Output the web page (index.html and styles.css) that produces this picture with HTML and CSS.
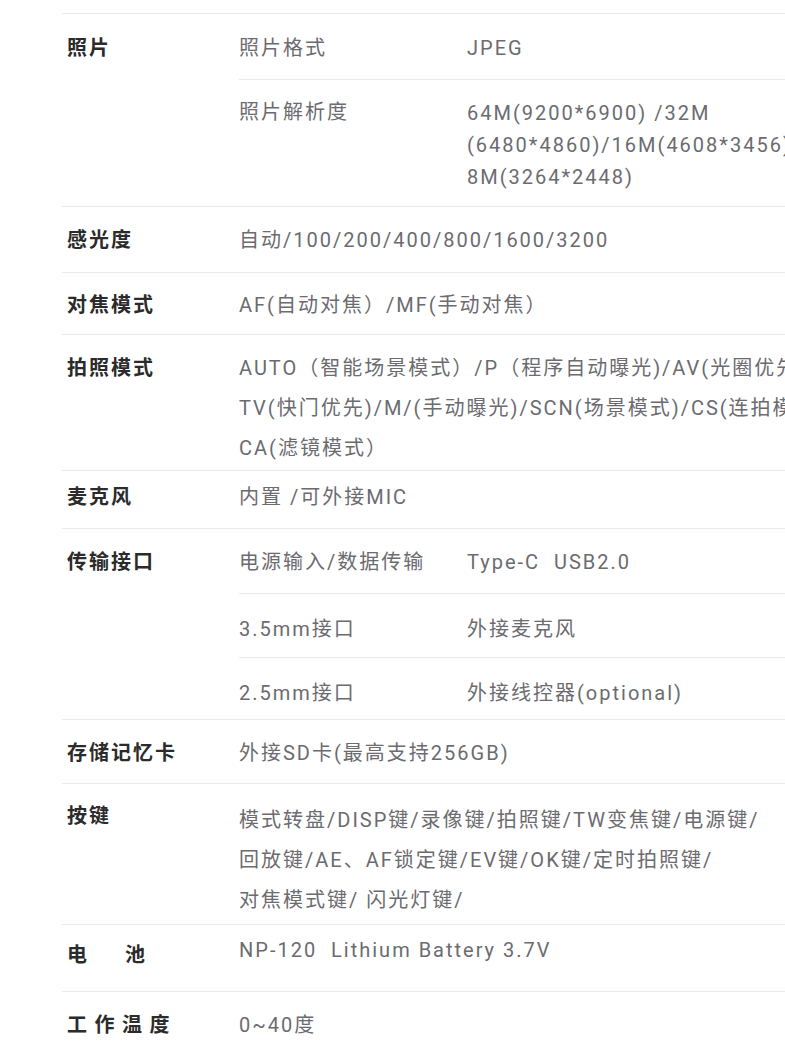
FILE: index.html
```html
<!DOCTYPE html>
<html lang="zh-CN">
<head>
<meta charset="utf-8">
<title>规格参数</title>
<link rel="stylesheet" href="styles.css">
</head>
<body>
<div class="page">
  <div class="spec">
    <div class="row">
      <div class="label pt19">照片</div>
      <div class="value">
        <div class="subrow pt19 pb16">
          <div class="key">照片格式</div>
          <div class="val">JPEG</div>
        </div>
        <div class="subrow pt17 pb13">
          <div class="key">照片解析度</div>
          <div class="val lh32">64M(9200*6900) /32M<br>(6480*4860)/16M(4608*3456)/<br>8M(3264*2448)</div>
        </div>
      </div>
    </div>

    <div class="row">
      <div class="label pt18">感光度</div>
      <div class="value pt18 pb17">自动/100/200/400/800/1600/3200</div>
    </div>

    <div class="row">
      <div class="label pt17">对焦模式</div>
      <div class="value pt17 pb14">AF(自动对焦）/MF(手动对焦）</div>
    </div>

    <div class="row">
      <div class="label pt13 lh40">拍照模式</div>
      <div class="value pt13 pb2 lh40">AUTO（智能场景模式）/P（程序自动曝光)/AV(光圈优先)/<br>TV(快门优先)/M/(手动曝光)/SCN(场景模式)/CS(连拍模式)/<br>CA(滤镜模式）</div>
    </div>

    <div class="row">
      <div class="label pt11">麦克风</div>
      <div class="value pt11 pb16">内置 /可外接MIC</div>
    </div>

    <div class="row">
      <div class="label pt18">传输接口</div>
      <div class="value">
        <div class="subrow pt18 pb16">
          <div class="key">电源输入/数据传输</div>
          <div class="val">Type-C&nbsp; USB2.0</div>
        </div>
        <div class="subrow pt20 pb13">
          <div class="key">3.5mm接口</div>
          <div class="val">外接麦克风</div>
        </div>
        <div class="subrow pt20 pb11">
          <div class="key">2.5mm接口</div>
          <div class="val">外接线控器(optional)</div>
        </div>
      </div>
    </div>

    <div class="row">
      <div class="label pt18">存储记忆卡</div>
      <div class="value pt18 pb15">外接SD卡(最高支持256GB)</div>
    </div>

    <div class="row">
      <div class="label pt17">按键</div>
      <div class="value pt16 pb4 lh40">模式转盘/DISP键/录像键/拍照键/TW变焦键/电源键/<br>回放键/AE、AF锁定键/EV键/OK键/定时拍照键/<br>对焦模式键/ 闪光灯键/</div>
    </div>

    <div class="row">
      <div class="label pt15 wide-battery">电池</div>
      <div class="value pt10 pb26">NP-120&nbsp; Lithium Battery 3.7V</div>
    </div>

    <div class="row">
      <div class="label pt18 wide-temp">工作温度</div>
      <div class="value pt18 pb20">0~40度</div>
    </div>
  </div>
</div>
</body>
</html>
```

FILE: styles.css
```css
html, body {
  margin: 0;
  padding: 0;
  background: #ffffff;
}

.page {
  width: 785px;
  height: 1053px;
  overflow: hidden;
  box-sizing: border-box;
  padding: 13px 0 0 62px;
  font-family: Roboto, "Noto Sans CJK SC", sans-serif;
  font-size: 20px;
  letter-spacing: 2px;
}

.spec {
  width: 920px;
}

.row {
  display: flex;
  align-items: flex-start;
  border-top: 1px solid #ebebef;
}

.label {
  flex: 0 0 177px;
  box-sizing: border-box;
  padding-left: 5px;
  line-height: 30px;
  color: #2b2b2b;
  font-weight: 700;
  white-space: nowrap;
}

.value {
  flex: 1 1 auto;
  line-height: 30px;
  color: #6b6b70;
  white-space: nowrap;
}

.subrow {
  display: flex;
}

.subrow + .subrow {
  border-top: 1px solid #ebebef;
}

.key {
  flex: 0 0 228px;
}

.val {
  flex: 1 1 auto;
}

.lh32 { line-height: 32px; }
.lh40 { line-height: 40px; }

.pt10 { padding-top: 10px; }
.pt11 { padding-top: 11px; }
.pt13 { padding-top: 13px; }
.pt15 { padding-top: 15px; }
.pt16 { padding-top: 16px; }
.pt17 { padding-top: 17px; }
.pt18 { padding-top: 18px; }
.pt19 { padding-top: 19px; }
.pt20 { padding-top: 20px; }

.pb2 { padding-bottom: 2px; }
.pb4 { padding-bottom: 4px; }
.pb11 { padding-bottom: 11px; }
.pb13 { padding-bottom: 13px; }
.pb14 { padding-bottom: 14px; }
.pb15 { padding-bottom: 15px; }
.pb16 { padding-bottom: 16px; }
.pb17 { padding-bottom: 17px; }
.pb20 { padding-bottom: 20px; }
.pb26 { padding-bottom: 26px; }

.wide-battery { letter-spacing: 38px; }
.wide-temp { letter-spacing: 7.5px; }
```
